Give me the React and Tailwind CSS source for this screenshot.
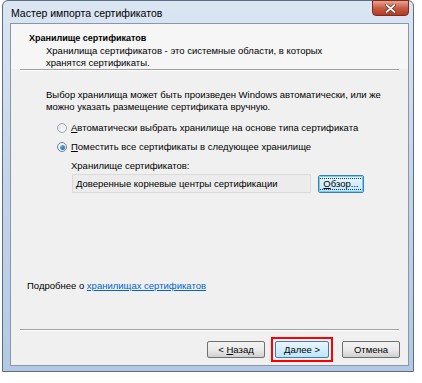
export default function App() {
  const font = { fontFamily: '"Liberation Sans",Arial,sans-serif' };
  return (
    <div className="w-[422px] h-[383px] bg-white relative overflow-hidden" style={font}>
      <div className="absolute left-[2px] top-0 w-[412px] h-[372px] rounded-t-[6px] border border-[#5c6e84] bg-gradient-to-b from-[#dbe6f3] via-[#c4d5e9] to-[#b3c9e3] flex flex-col">
        {/* title bar */}
        <div className="h-[22px] flex items-start relative">
          <span className="text-[10.5px] text-black mt-[5px] ml-[8px] leading-[14px]">Мастер импорта сертификатов</span>
          <div className="absolute right-[4px] top-[-1px] w-[37px] h-[16px] rounded-b-[4px] border border-[#7a2a20] bg-gradient-to-b from-[#e8a493] via-[#c75b44] to-[#b43a22] flex items-center justify-center">
            <svg width="11" height="9" viewBox="0 0 11 9">
              <path d="M1.5 1 L9.5 8 M9.5 1 L1.5 8" stroke="#5a1a10" strokeWidth="3" strokeLinecap="round" />
              <path d="M1.5 1 L9.5 8 M9.5 1 L1.5 8" stroke="#ffffff" strokeWidth="1.8" strokeLinecap="round" />
            </svg>
          </div>
        </div>
        {/* client */}
        <div className="ml-[7px] mr-[4px] mb-[5px] flex-1 border border-[#8896a8] bg-[#f0f0f0] flex flex-col text-[9.5px] leading-[12px] text-black">
          <div className="bg-[#f6f6f6] h-[45px] pl-[18px] pt-[8px]">
            <div className="font-bold text-[9px]">Хранилище сертификатов</div>
            <div className="pl-[17px] mt-[1px]">Хранилища сертификатов - это системные области, в которых<br />хранятся сертификаты.</div>
          </div>
          <div className="mx-[9px] h-px bg-[#a0a0a0]" />
          <div className="mx-[9px] h-px bg-white" />
          <div className="pl-[35px] pt-[18px]">
            <div>Выбор хранилища может быть произведен Windows автоматически, или же<br />можно указать размещение сертификата вручную.</div>
            <div className="mt-[9px] ml-[11px] flex items-center gap-[4px]">
              <span className="w-[10px] h-[10px] rounded-full border border-[#9aa4b0] bg-gradient-to-br from-[#e6e6e6] to-[#fafafa]" />
              <span><u>А</u>втоматически выбрать хранилище на основе типа сертификата</span>
            </div>
            <div className="mt-[7px] ml-[11px] flex items-center gap-[4px]">
              <span className="w-[10px] h-[10px] rounded-full border border-[#6f7e91] bg-[#f2f2f2] flex items-center justify-center">
                <span className="w-[5px] h-[5px] rounded-full bg-gradient-to-br from-[#6cc0f0] to-[#1d5fa8]" />
              </span>
              <span><u>П</u>оместить все сертификаты в следующее хранилище</span>
            </div>
            <div className="ml-[25px] mt-[7px]">Хранилище сертификатов:</div>
            <div className="ml-[26px] mt-[2px] flex items-center">
              <div className="w-[239px] h-[19px] border border-[#dadada] bg-[#ececec] pl-[3px] flex items-center">Доверенные корневые центры сертификации</div>
              <div className="ml-[7px] w-[46px] h-[18px] rounded-[2px] border border-[#3c7fb1] outline outline-1 outline-[#6ad0f5] outline-offset-[-2px] bg-gradient-to-b from-[#eaf6fd] to-[#bee6fd] flex items-center justify-center">
                <span className="border border-dotted border-[#333] px-[3px] leading-[10px]"><u>О</u>бзор...</span>
              </div>
            </div>
          </div>
          <div className="flex-1" />
          <div className="pl-[16px] mb-[37px]">Подробнее о <span className="text-[#0066cc] underline">хранилищах сертификатов</span></div>
          <div className="mx-[9px] h-px bg-[#a0a0a0]" />
          <div className="mx-[9px] h-px bg-white" />
          <div className="flex justify-end items-center gap-[6px] pr-[8px] pt-[6px] pb-[3px]">
            <div className="w-[58px] h-[17px] rounded-[2px] border border-[#707070] bg-gradient-to-b from-[#f2f2f2] via-[#ebebeb] to-[#d0d0d0] flex items-center justify-center"><span>&lt; <u>Н</u>азад</span></div>
            <div className="p-[2px] border-[2px] border-[#ff0000]">
              <div className="w-[54px] h-[17px] rounded-[2px] border border-[#3c7fb1] bg-gradient-to-b from-[#eaf6fd] to-[#bee6fd] flex items-center justify-center"><span><u>Д</u>алее &gt;</span></div>
            </div>
            <div className="ml-[3px] w-[58px] h-[17px] rounded-[2px] border border-[#707070] bg-gradient-to-b from-[#f2f2f2] via-[#ebebeb] to-[#d0d0d0] flex items-center justify-center">Отмена</div>
          </div>
        </div>
      </div>
    </div>
  );
}
